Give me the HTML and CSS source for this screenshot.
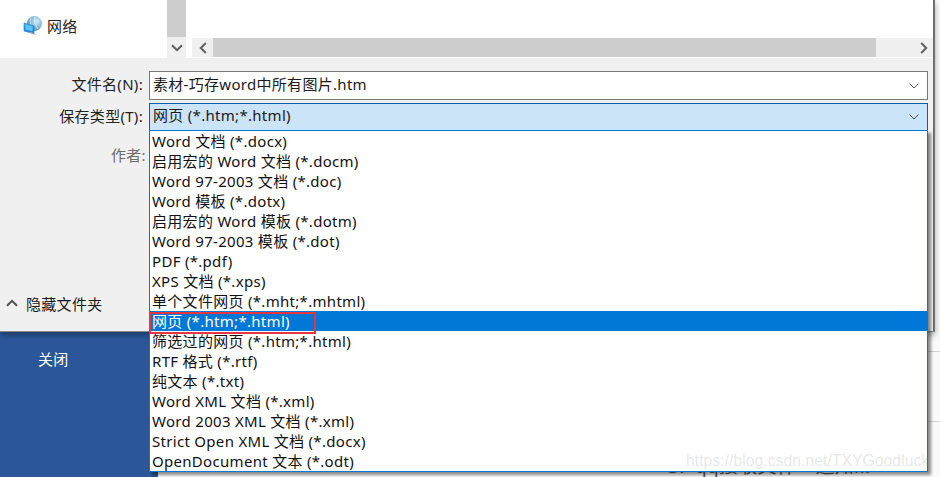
FILE: index.html
```html
<!DOCTYPE html>
<html lang="zh">
<head>
<meta charset="utf-8">
<title>另存为</title>
<link rel="stylesheet" href="styles.css">
</head>
<body>
<div class="screen">
  <div class="dialog">
    <div class="browser">
      <div class="nav">
        <svg class="net-icon" width="20" height="20" viewBox="0 0 20 20">
          <defs>
            <radialGradient id="g" cx="0.65" cy="0.35" r="0.8"><stop offset="0" stop-color="#d6ecf5"/><stop offset="0.6" stop-color="#74b1d0"/><stop offset="1" stop-color="#3f7fa8"/></radialGradient>
            <linearGradient id="m" x1="0" y1="0" x2="0" y2="1"><stop offset="0" stop-color="#49b4ee"/><stop offset="1" stop-color="#1a7fd0"/></linearGradient>
          </defs>
          <circle cx="11.5" cy="7.5" r="7.5" fill="url(#g)"/>
          <path d="M8 1.5C6.5 5 7.5 9 10 12M12 0.5C10.500 4 12 9 15 13" stroke="#e4f2f8" stroke-width="1" fill="none" opacity="0.7"/>
          <path d="M1 7l10 3v7.500L1 15z" fill="url(#m)" stroke="#2a6fa8" stroke-width="0.6"/>
          <path d="M2.500 8.500l7 2.100v4.600l-7-1.700z" fill="#5cc3f5"/>
          <path d="M5 16l6 2.500h3l-6-2.500z" fill="#8aa6b8"/>
        </svg>
        <span class="net-label">网络</span>
      </div>
      <div class="vscroll">
        <div class="vthumb"></div>
        <div class="varrow">
          <svg width="12" height="8" viewBox="0 0 12 8"><path d="M1 1.200l5 5 5-5" fill="none" stroke="#606060" stroke-width="2"/></svg>
        </div>
      </div>
      <div class="files">
        <div class="file-area"></div>
        <div class="hscroll">
          <div class="harrow">
            <svg width="8" height="12" viewBox="0 0 8 12"><path d="M6.800 1l-5 5 5 5" fill="none" stroke="#606060" stroke-width="2"/></svg>
          </div>
          <div class="hthumb"></div>
          <div class="harrow-right">
            <svg width="8" height="12" viewBox="0 0 8 12"><path d="M1.200 1l5 5-5 5" fill="none" stroke="#606060" stroke-width="2"/></svg>
          </div>
        </div>
      </div>
    </div>
    <div class="form">
      <div class="row">
        <label class="label">文件名(N):</label>
        <div class="combo">
          <span class="combo-text">素材-巧存word中所有图片.htm</span>
          <svg class="combo-arrow" width="10" height="6" viewBox="0 0 10 6"><path d="M0.500 0.500l4.500 4.500 4.500-4.500" fill="none" stroke="#555" stroke-width="1"/></svg>
        </div>
      </div>
      <div class="row">
        <label class="label">保存类型(T):</label>
        <div class="combo combo-open">
          <span class="combo-text">网页 (*.htm;*.html)</span>
          <svg class="combo-arrow" width="10" height="6" viewBox="0 0 10 6"><path d="M0.500 0.500l4.500 4.500 4.500-4.500" fill="none" stroke="#444" stroke-width="1"/></svg>
        </div>
      </div>
      <div class="row-author"><span class="author">作者:</span></div>
    </div>
    <div class="footer">
      <svg class="up-icon" width="12" height="8" viewBox="0 0 12 8"><path d="M1 6.800l5-5 5 5" fill="none" stroke="#505050" stroke-width="2"/></svg>
      <span class="hide-folders">隐藏文件夹</span>
    </div>
  </div>
  <div class="lower">
    <div class="backstage"><span class="close">关闭</span></div>
    <div class="doc">
      <div class="doc-line first"></div>
      <div class="doc-line second"></div>
      <div class="doc-text">3.&nbsp;&nbsp;qq接收文件一通知...</div>
    </div>
  </div>
  <ul class="menu">
    <li>Word 文档 (*.docx)</li>
    <li>启用宏的 Word 文档 (*.docm)</li>
    <li>Word 97-2003 文档 (*.doc)</li>
    <li>Word 模板 (*.dotx)</li>
    <li>启用宏的 Word 模板 (*.dotm)</li>
    <li>Word 97-2003 模板 (*.dot)</li>
    <li>PDF (*.pdf)</li>
    <li>XPS 文档 (*.xps)</li>
    <li>单个文件网页 (*.mht;*.mhtml)</li>
    <li class="selected">网页 (*.htm;*.html)</li>
    <li>筛选过的网页 (*.htm;*.html)</li>
    <li>RTF 格式 (*.rtf)</li>
    <li>纯文本 (*.txt)</li>
    <li>Word XML 文档 (*.xml)</li>
    <li>Word 2003 XML 文档 (*.xml)</li>
    <li>Strict Open XML 文档 (*.docx)</li>
    <li>OpenDocument 文本 (*.odt)</li>
  </ul>
  <div class="redbox"></div>
  <div class="watermark">https://blog.csdn.net/TXYGoodluck</div>
</div>
</body>
</html>
```
FILE: styles.css
```css
* { box-sizing: border-box; }
html, body { margin: 0; padding: 0; }
body {
  font-family: "Noto Sans", "Noto Sans CJK SC", sans-serif;
  font-size: 15px;
  letter-spacing: 0.3px;
  color: #1a1a1a;
  background: #fff;
}
.screen {
  position: relative;
  width: 940px;
  height: 477px;
  overflow: hidden;
  background: #fafafa;
}
.dialog {
  width: 935px;
  height: 332px;
  background: #f0f0f0;
  border-right: 2px solid #6f6f6f;
  border-bottom: 1px solid #8a8a8a;
  box-shadow: 0 3px 6px rgba(0, 0, 0, 0.35);
  position: relative;
  z-index: 1;
}
.browser {
  display: flex;
  height: 58px;
  background: #fff;
}
.nav {
  width: 167px;
  display: flex;
  align-items: flex-start;
  padding: 16px 0 0 23px;
  gap: 4px;
}
.net-label { line-height: 20px; color: #222; }
.vscroll {
  width: 19px;
  background: #f0f0f0;
  display: flex;
  flex-direction: column;
}
.vthumb { height: 37px; background: #cdcdcd; }
.varrow {
  flex: 1;
  display: flex;
  align-items: center;
  justify-content: center;
}
.files {
  flex: 1;
  margin-left: 6px;
  display: flex;
  flex-direction: column;
}
.file-area { height: 38px; }
.hscroll {
  height: 19px;
  background: #f0f0f0;
  display: flex;
  align-items: stretch;
}
.harrow {
  width: 21px;
  display: flex;
  align-items: center;
  justify-content: center;
}
.hthumb { width: 663px; background: #cdcdcd; }
.harrow-right {
  flex: 1;
  display: flex;
  align-items: center;
  justify-content: flex-end;
  padding-right: 5px;
}
.form {
  display: flex;
  flex-direction: column;
  padding-top: 13px;
  gap: 3px;
}
.row { display: flex; height: 29px; }
.label {
  width: 143px;
  text-align: right;
  line-height: 27px;
  color: #222;
}
.combo {
  margin-left: 6px;
  width: 779px;
  height: 29px;
  display: flex;
  align-items: center;
  justify-content: space-between;
  background: #fff;
  border: 1px solid #7a7a7a;
  padding: 0 8px 4px 3px;
}
.combo-open {
  background: #cce4f7;
  border-color: #005fb0;
  border-bottom-width: 2px;
}
.combo-arrow { margin-top: 4px; }
.combo-text { line-height: 24px; }
.row-author {
  height: 20px;
  margin-top: 10px;
  padding-left: 111px;
}
.author { color: #6d6d6d; line-height: 20px; }
.footer {
  position: absolute;
  left: 0;
  top: 293px;
  display: flex;
  align-items: center;
  gap: 8px;
  padding-left: 6px;
  height: 20px;
}
.lower {
  display: flex;
  height: 145px;
}
.backstage {
  width: 158px;
  background: #2b579a;
  padding: 17px 0 0 38px;
}
.close { color: #fff; line-height: 20px; }
.doc { flex: 1; position: relative; }
.doc-line {
  position: absolute;
  right: 0;
  width: 20px;
  height: 1px;
  background: #d2d2d2;
}
.first { top: 19px; }
.second { top: 89px; }
.doc-text {
  position: absolute;
  left: 510px;
  top: 122px;
  font-size: 19px;
  line-height: 24px;
  color: #555;
  white-space: nowrap;
}
.menu {
  position: absolute;
  left: 149px;
  top: 130px;
  width: 779px;
  height: 342px;
  margin: 0;
  padding: 0;
  list-style: none;
  background: #fff;
  border: 1px solid #0078d7;
  box-shadow: 3px 3px 3px rgba(0, 0, 0, 0.45);
  z-index: 2;
}
.menu li {
  height: 20px;
  line-height: 20px;
  padding-left: 2px;
  color: #111;
  white-space: nowrap;
}
.menu .selected { background: #0078d7; color: #fff; }
.redbox {
  position: absolute;
  left: 149px;
  top: 312px;
  width: 167px;
  height: 22px;
  border: 2px solid #e8343c;
  z-index: 3;
}
.watermark {
  position: absolute;
  left: 686px;
  top: 449px;
  font-family: "Liberation Sans", sans-serif;
  font-size: 15.8px;
  letter-spacing: 0;
  line-height: 24px;
  color: rgba(130, 130, 130, 0.2);
  white-space: nowrap;
  z-index: 4;
}
```
